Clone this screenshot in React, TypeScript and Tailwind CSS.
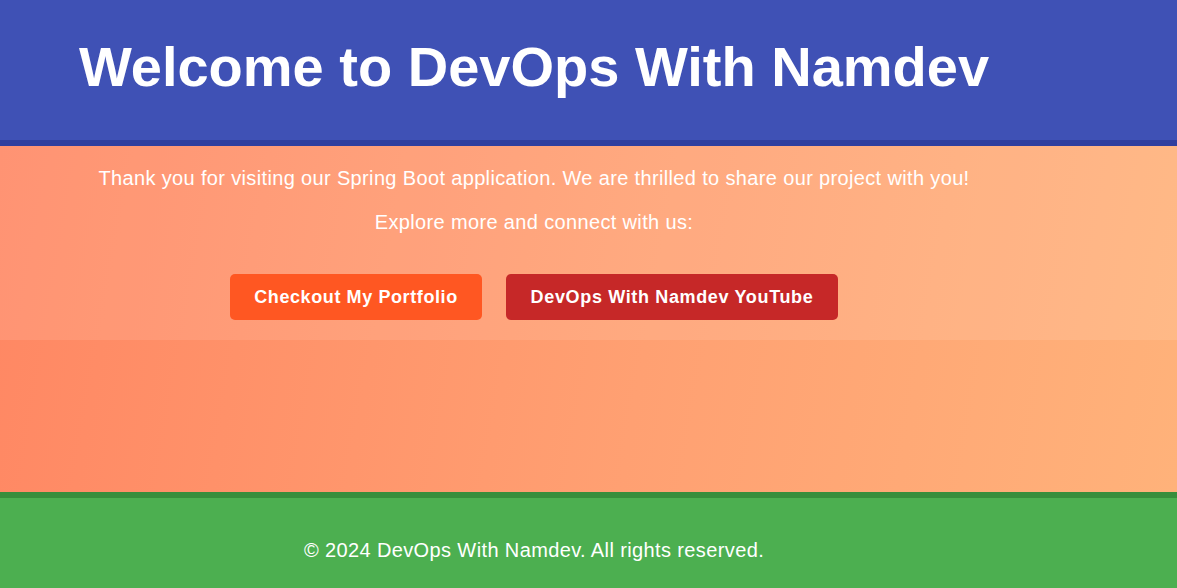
export default function App() {
  return (
    <div className="min-h-[588px] flex flex-col font-['Liberation_Sans',Arial,sans-serif] text-white">
      <header className="h-[146px] bg-[#3f51b5] border-b-[6px] border-[#303f9f]">
        <div className="w-[1068px] text-center pt-[33px]">
          <h1 className="text-[56px] leading-[68px] font-bold">Welcome to DevOps With Namdev</h1>
        </div>
      </header>

      <main className="h-[346px] bg-[linear-gradient(100deg,#ff8763_0%,#ffa072_55%,#ffb27a_100%)]">
        <section className="h-[194px] bg-white/10">
          <div className="w-[1068px] text-center pt-[20px]">
            <p className="text-[20px] leading-[24px] tracking-[0.35px]">
              Thank you for visiting our Spring Boot application. We are thrilled to share our project with you!
            </p>
            <p className="text-[20px] leading-[24px] tracking-[0.35px] mt-[20px]">Explore more and connect with us:</p>
            <div className="flex justify-center gap-[24px] mt-[40px]">
              <a className="w-[252px] h-[46px] flex items-center justify-center rounded-[5px] bg-[#ff5722] text-[18px] font-bold tracking-[0.6px]">
                Checkout My Portfolio
              </a>
              <a className="w-[332px] h-[46px] flex items-center justify-center rounded-[5px] bg-[#c62828] text-[18px] font-bold tracking-[0.65px]">
                DevOps With Namdev YouTube
              </a>
            </div>
          </div>
        </section>
      </main>

      <footer className="h-[96px] bg-[#4caf50] border-t-[6px] border-[#388e3c]">
        <div className="w-[1068px] text-center pt-[40px]">
          <p className="text-[20px] leading-[24px] tracking-[0.38px]">© 2024 DevOps With Namdev. All rights reserved.</p>
        </div>
      </footer>
    </div>
  );
}
